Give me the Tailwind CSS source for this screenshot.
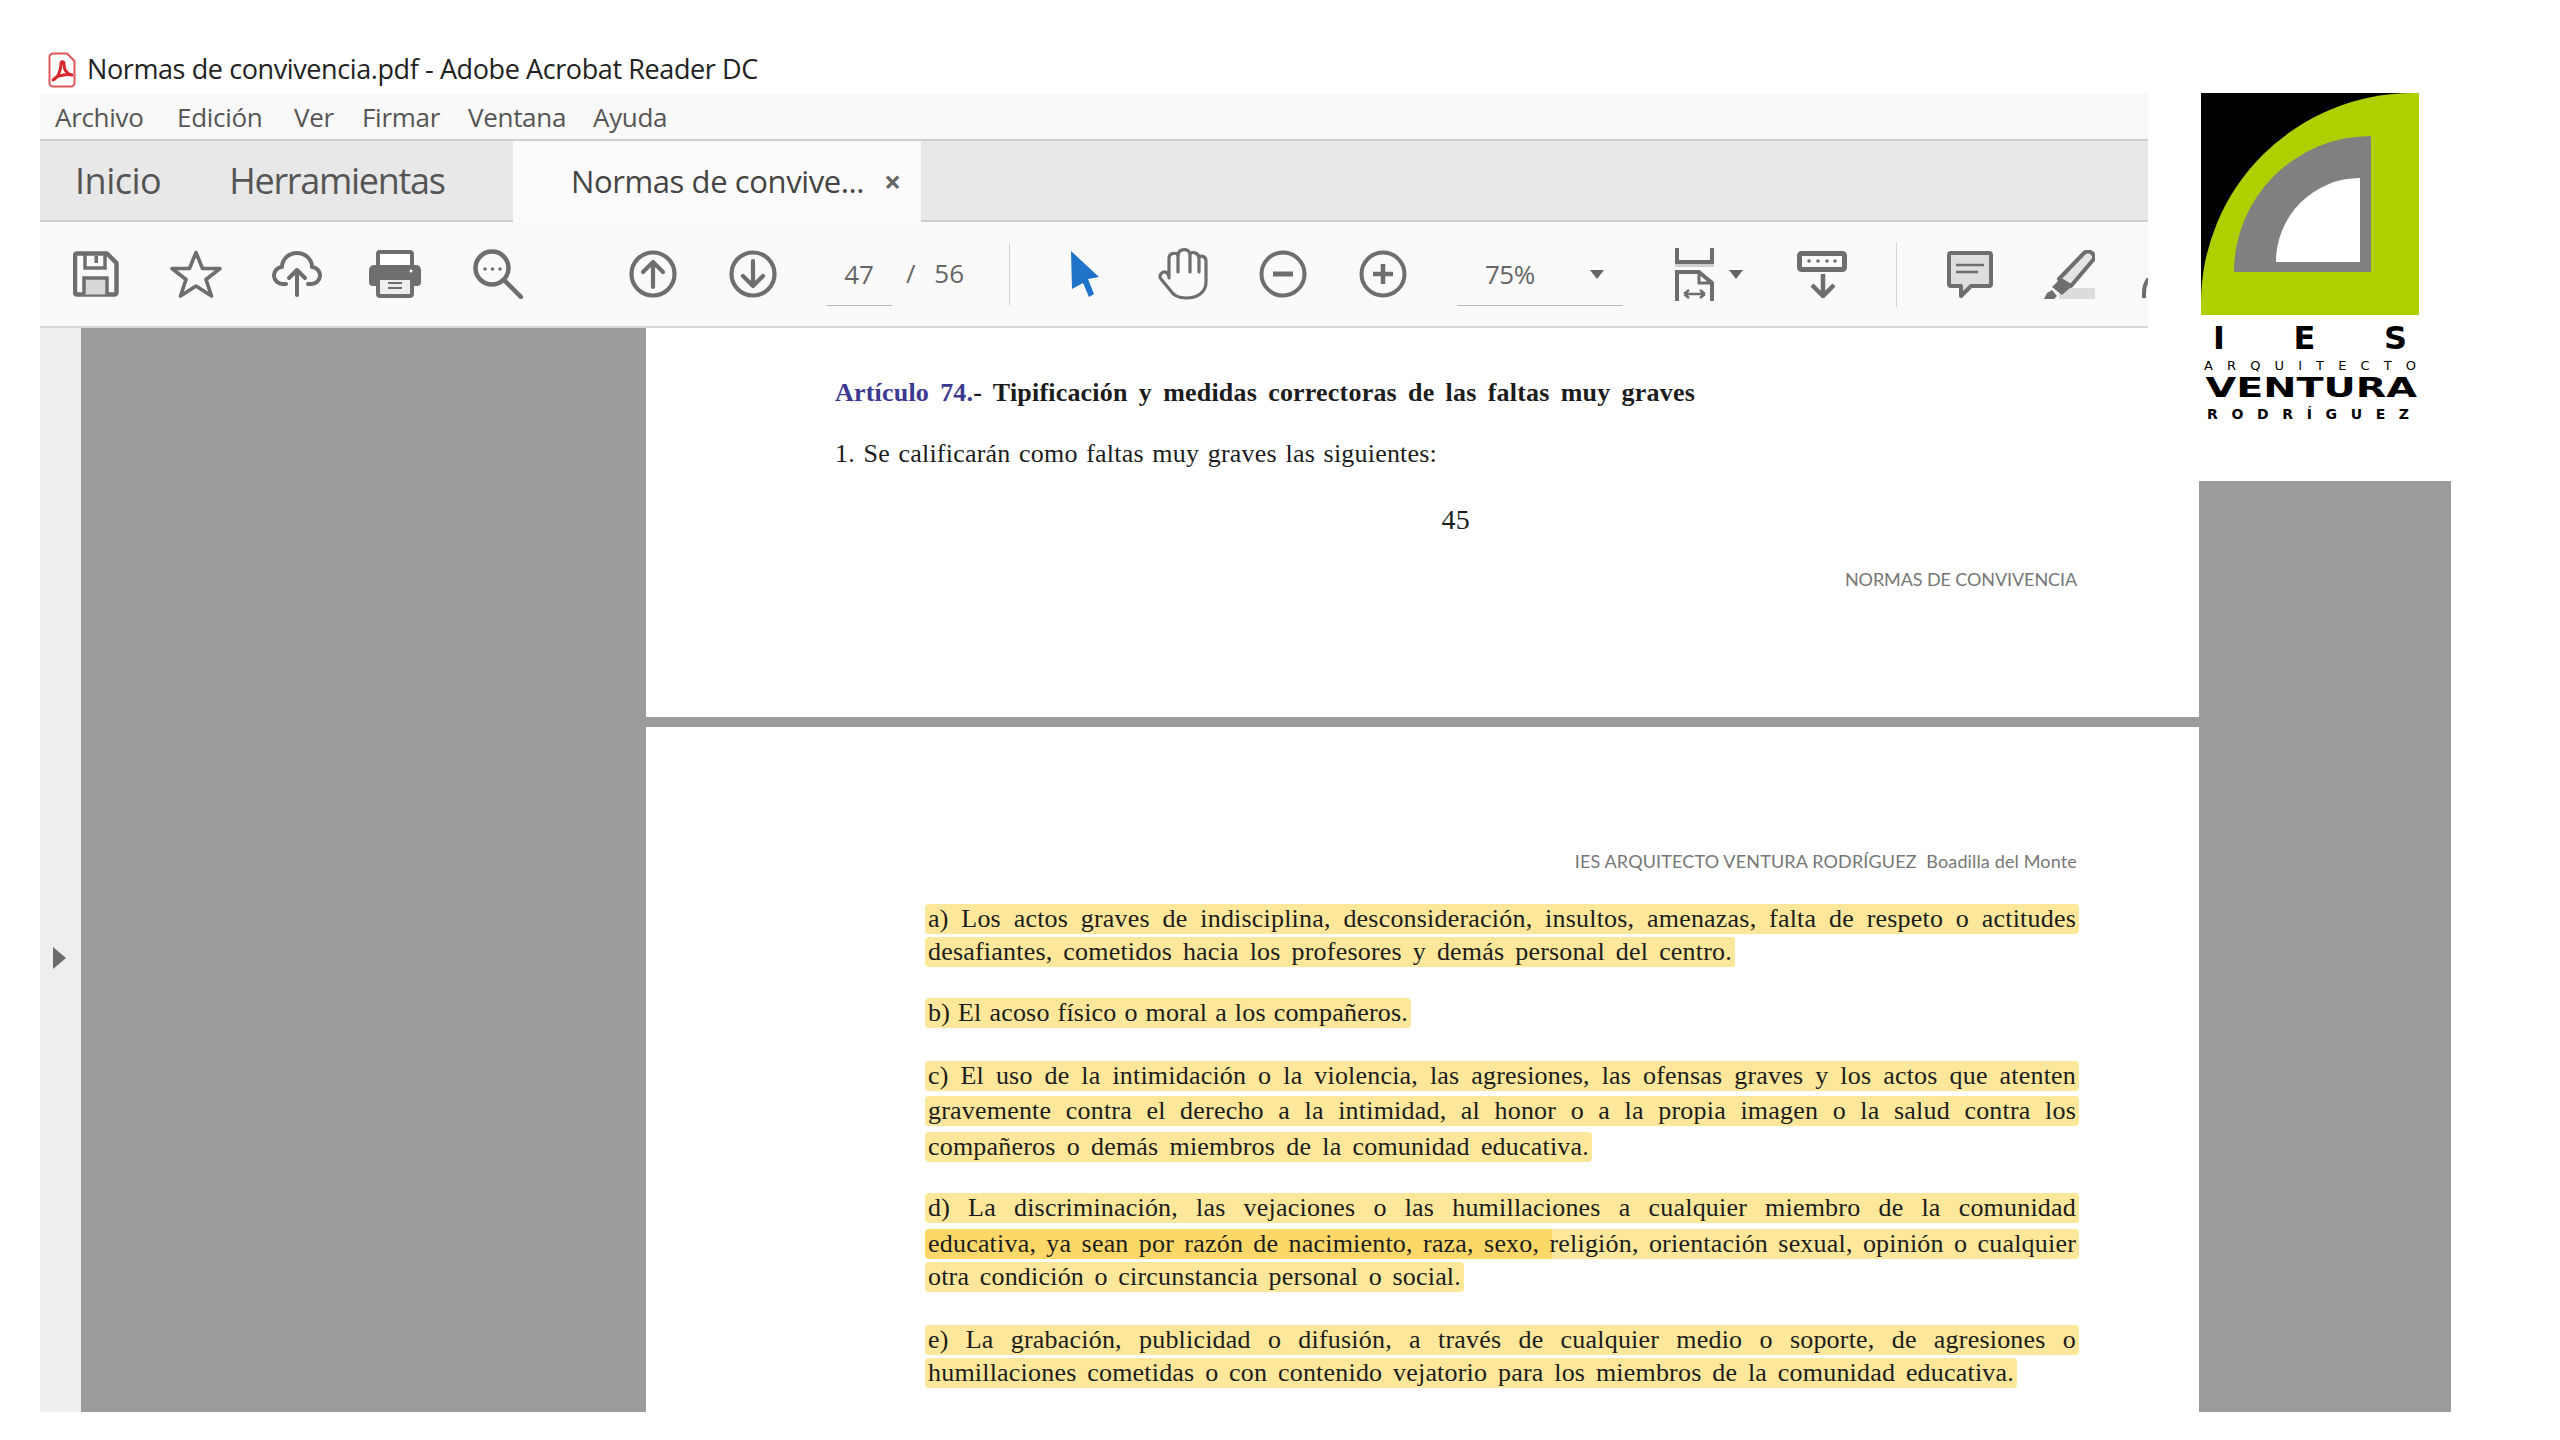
<!DOCTYPE html>
<html lang="es">

<head>
    <meta charset="UTF-8" />
    <title>Normas de convivencia</title>
    <script src="https://cdn.jsdelivr.net/npm/@tailwindcss/browser@4"></script>
</head>

<body class="w-[2560px] h-[1440px] bg-white overflow-hidden font-['Open_Sans',sans-serif]">
    <div class="flex h-[1412px] pl-[40px]">
        <!-- left: reader window -->
        <div class="w-[2159px] flex flex-col">
            <div class="w-[2108px] flex flex-col">
                <!-- title bar -->
                <div class="h-[93px] pt-[46px] pl-[8px] flex items-center bg-white">
                    <svg class="w-[28px] h-[36px]" viewBox="0 0 28 36">
                        <path d="M5 1.500H19L26.500 9V31a3.500 3.500 0 0 1-3.500 3.500H5A3.500 3.500 0 0 1 1.500 31V5A3.500 3.500 0 0 1 5 1.500Z" fill="#fff" stroke="#e0575b" stroke-width="2" />
                        <path d="M5 28C10 26 13 18 13 12C13 9 16 9 16 12C16 18 19 22 24 23C20 22 11 23 7 26Z" fill="none" stroke="#d9262c" stroke-width="3" stroke-linejoin="round" />
                    </svg>
                    <span class="ml-[11px] text-[27px] tracking-[-0.4px] text-[#222] whitespace-nowrap">Normas de convivencia.pdf - Adobe Acrobat Reader DC</span>
                </div>
                <!-- menu -->
                <div class="h-[48px] pt-[2px] bg-[#f9f9f9] border-b-2 border-[#cfcfcf] flex items-center text-[26px] tracking-[-0.3px] text-[#555]">
                    <span class="ml-[15px] w-[122px]">Archivo</span>
                    <span class="w-[117px]">Edición</span>
                    <span class="w-[68px]">Ver</span>
                    <span class="w-[106px]">Firmar</span>
                    <span class="w-[125px]">Ventana</span>
                    <span>Ayuda</span>
                </div>
                <!-- tabs -->
                <div class="h-[81px] bg-[#e8e8e8] flex border-b-2 border-[#cfcfcf]">
                    <div class="w-[473px] flex items-center text-[36px] text-[#555]">
                        <span class="ml-[35px] tracking-[-0.5px]">Inicio</span>
                        <span class="ml-[68px] tracking-[-1.3px]">Herramientas</span>
                    </div>
                    <div class="w-[408px] h-[81px] bg-[#fbfbfb] flex items-center text-[31px] tracking-[-0.4px] text-[#444]">
                        <span class="ml-[58px] whitespace-nowrap">Normas de convive...</span>
                        <span class="ml-[20px] text-[30px] font-bold text-[#666] leading-none">×</span>
                    </div>
                </div>
                <!-- toolbar -->
                <div class="h-[106px] bg-[#fafafa] border-b-2 border-[#d6d6d6] flex items-center overflow-hidden text-[#666]">
                    <svg class="ml-[33px] w-[46px] h-[46px] shrink-0" viewBox="0 0 46 46" fill="none" stroke="#6e6e6e" stroke-width="4.500">
                        <path d="M4 2.500H34L43.500 12V41.500a2 2 0 0 1-2 2H4a2 2 0 0 1-2-2V4.500a2 2 0 0 1 2-2Z" stroke-linejoin="round" />
                        <path d="M12 2.500V17H32V2.500" stroke-width="3.500" />
                        <rect x="21.500" y="5" width="3.500" height="7" fill="#6e6e6e" stroke="none" />
                        <path d="M11 43.500V27H34V43.500" fill="#d8d8d8" stroke-width="3.500" />
                    </svg>
                    <svg class="ml-[50px] w-[54px] h-[50px] shrink-0" viewBox="0 0 54 50" fill="none" stroke="#6e6e6e" stroke-width="3.600" stroke-linejoin="round">
                        <path d="M27 3.500L33.500 19.500H51L37 30.500L42.500 47L27 37L11.500 47L17 30.500L3 19.500H20.500Z" />
                    </svg>
                    <svg class="ml-[49px] w-[50px] h-[46px] shrink-0" viewBox="0 0 50 46" fill="none" stroke="#6e6e6e" stroke-width="4" stroke-linecap="round" stroke-linejoin="round">
                        <path d="M14 33H11A8.500 8.500 0 0 1 10 16A15 14 0 0 1 40 16A8.500 8.500 0 0 1 39 33H36" />
                        <path d="M25 44V19M17 27L25 19L33 27" />
                    </svg>
                    <svg class="ml-[47px] w-[52px] h-[48px] shrink-0" viewBox="0 0 52 48">
                        <rect x="9" y="2" width="34" height="18" rx="2" fill="#fff" stroke="#6e6e6e" stroke-width="4" />
                        <path d="M5 15H47a5 5 0 0 1 5 5V32a4 4 0 0 1-4 4H4a4 4 0 0 1-4-4V20a5 5 0 0 1 5-5Z" fill="#6e6e6e" />
                        <circle cx="42" cy="21" r="1.500" fill="#fff" />
                        <rect x="9" y="28" width="34" height="18" rx="2" fill="#eeeeee" stroke="#6e6e6e" stroke-width="4" />
                        <path d="M19 33H33M19 38H33" stroke="#6e6e6e" stroke-width="2" />
                    </svg>
                    <svg class="ml-[52px] w-[50px] h-[50px] shrink-0" viewBox="0 0 50 50" fill="none" stroke="#6e6e6e">
                        <circle cx="19" cy="19" r="16.500" stroke-width="4.500" />
                        <path d="M32 32L48 48" stroke-width="4.500" stroke-linecap="round" />
                        <circle cx="12" cy="20" r="1.800" fill="#6e6e6e" stroke="none" />
                        <circle cx="19.500" cy="20" r="1.800" fill="#6e6e6e" stroke="none" />
                        <circle cx="27" cy="20" r="1.800" fill="#6e6e6e" stroke="none" />
                    </svg>
                    <svg class="ml-[106px] w-[48px] h-[48px] shrink-0" viewBox="0 0 48 48" fill="none" stroke="#6e6e6e" stroke-width="4.200" stroke-linecap="round" stroke-linejoin="round">
                        <circle cx="24" cy="24" r="21.500" />
                        <path d="M24 37V12M14 22L24 12L34 22" />
                    </svg>
                    <svg class="ml-[52px] w-[48px] h-[48px] shrink-0" viewBox="0 0 48 48" fill="none" stroke="#6e6e6e" stroke-width="4.200" stroke-linecap="round" stroke-linejoin="round">
                        <circle cx="24" cy="24" r="21.500" />
                        <path d="M24 11V36M14 26L24 36L34 26" />
                    </svg>
                    <div class="ml-[49px] w-[66px] h-[49px] mt-[14px] border-b border-[#bbb] text-center text-[26px] leading-[34px] text-[#666] shrink-0">47</div>
                    <div class="ml-[14px] w-[58px] mb-[1px] flex justify-between text-[26px] text-[#666] shrink-0"><span>/</span><span>56</span></div>
                    <div class="ml-[45px] w-px h-[63px] bg-[#d4d4d4] shrink-0"></div>
                    <svg class="ml-[61px] w-[28px] h-[46px] shrink-0" viewBox="0 0 28 46">
                        <path d="M0 0L28 26L17 28L23 43L18 46L12 32L1 38Z" fill="#1f73c9" />
                    </svg>
                    <svg class="ml-[59px] w-[50px] h-[52px] shrink-0" viewBox="0 0 50 52" fill="none" stroke="#6e6e6e" stroke-width="3.200" stroke-linecap="round" stroke-linejoin="round">
                        <path d="M11 30V10C11 5 18 4 20 7C21 0 31 0 32 6C34 3 40 5 41 9C44 7 48 9 48 13V34C48 44 40 50 28 50C20 50 15 47 12 42L3 31C0 27 5 22 9 25L11 28" />
                        <path d="M20 7V24M32 6V24M41 9V24" />
                    </svg>
                    <svg class="ml-[51px] w-[48px] h-[48px] shrink-0" viewBox="0 0 48 48" fill="none" stroke="#6e6e6e" stroke-width="4">
                        <circle cx="24" cy="24" r="21.500" />
                        <path d="M14 24H34" stroke-width="5" />
                    </svg>
                    <svg class="ml-[52px] w-[48px] h-[48px] shrink-0" viewBox="0 0 48 48" fill="none" stroke="#6e6e6e" stroke-width="4">
                        <circle cx="24" cy="24" r="21.500" />
                        <path d="M14 24H34M24 14V34" stroke-width="4.500" />
                    </svg>
                    <div class="ml-[50px] w-[166px] h-[49px] mt-[14px] pb-[13px] border-b border-[#bbb] flex items-center text-[26px] text-[#666] shrink-0">
                        <span class="ml-[28px] tracking-[-0.5px]">75%</span>
                        <span class="ml-[55px] w-0 h-0 border-x-[7px] border-x-transparent border-t-[9px] border-t-[#666]"></span>
                    </div>
                    <svg class="ml-[52px] w-[39px] h-[53px] shrink-0" viewBox="0 0 39 53" fill="none" stroke="#6e6e6e" stroke-width="4">
                        <path d="M2 0V14H37V0" />
                        <rect x="0" y="16" width="39" height="3" fill="#d0d0d0" stroke="none" />
                        <path d="M2 53V24H24L37 35V53" />
                        <path d="M24 24V35H37" stroke-width="3" />
                        <path d="M9 46H30M9 46L14 42M9 46L14 50M30 46L25 42M30 46L25 50" stroke-width="2.500" />
                    </svg>
                    <span class="ml-[15px] w-0 h-0 border-x-[7px] border-x-transparent border-t-[9px] border-t-[#666] shrink-0"></span>
                    <svg class="ml-[54px] w-[50px] h-[47px] shrink-0" viewBox="0 0 50 47" fill="none" stroke="#6e6e6e">
                        <rect x="2.500" y="2.500" width="45" height="16" rx="2" stroke-width="5" fill="#fafafa" />
                        <circle cx="12" cy="10" r="1.800" fill="#6e6e6e" stroke="none" />
                        <circle cx="21" cy="10" r="1.800" fill="#6e6e6e" stroke="none" />
                        <circle cx="30" cy="10" r="1.800" fill="#6e6e6e" stroke="none" />
                        <circle cx="38" cy="10" r="1.800" fill="#6e6e6e" stroke="none" />
                        <path d="M26 23V45M15 34L26 45L37 34" stroke-width="4.500" />
                    </svg>
                    <div class="ml-[49px] w-px h-[65px] bg-[#d4d4d4] shrink-0"></div>
                    <svg class="ml-[50px] w-[46px] h-[47px] shrink-0" viewBox="0 0 46 47">
                        <path d="M4 2H42a2 2 0 0 1 2 2V33a2 2 0 0 1-2 2H24L14 45V35H4a2 2 0 0 1-2-2V4a2 2 0 0 1 2-2Z" fill="#dedede" stroke="#6e6e6e" stroke-width="4" stroke-linejoin="round" />
                        <path d="M9 14H37M9 21H31" stroke="#6e6e6e" stroke-width="2.500" />
                    </svg>
                    <svg class="ml-[51px] w-[51px] h-[49px] shrink-0" viewBox="0 0 51 49">
                        <rect x="15" y="38" width="36" height="11" fill="#dcdcdc" />
                        <path d="M40 3C42 1 46 1 48 3C50 5 51 8 49 10L27 36L15 29Z" fill="#e4e4e4" stroke="#6e6e6e" stroke-width="4" stroke-linejoin="round" />
                        <path d="M15 30L27 37L18 45L8 37Z" fill="#6e6e6e" />
                        <path d="M0 49L3 43L8 40L13 46L10 49Z" fill="#6e6e6e" />
                    </svg>
                    <svg class="ml-[47px] w-[10px] h-[20px] mt-[27px] shrink-0" viewBox="0 0 10 20" fill="none" stroke="#6e6e6e" stroke-width="4">
                        <path d="M7 0C3 5 2 10 2 15V20" />
                    </svg>
                </div>
            </div>
            <!-- document area -->
            <div class="flex-1 flex min-h-0">
                <div class="w-[41px] bg-[#eeeeee] flex items-center pt-[176px]">
                    <span class="ml-[13px] w-0 h-0 border-y-[11px] border-y-transparent border-l-[13px] border-l-[#6b6b6b]"></span>
                </div>
                <div class="w-[565px] bg-[#9c9c9c]"></div>
                <div class="flex-1 flex flex-col bg-[#9c9c9c] font-['Liberation_Serif',serif] text-[26px] tracking-[0.2px] text-[#1c1c1c]">
                    <!-- page 45 -->
                    <div class="h-[389px] bg-white pt-[50px] pl-[189px]">
                        <div class="h-[30px] w-[860px] leading-[30px] font-bold [text-align-last:justify]"><span class="text-[#3b3a8f]">Artículo 74.</span>- Tipificación y medidas correctoras de las faltas muy graves</div>
                        <div class="h-[30px] w-[602px] mt-[31px] leading-[30px] [text-align-last:justify]">1. Se calificarán como faltas muy graves las siguientes:</div>
                        <div class="h-[30px] w-[635px] mt-[36px] leading-[30px] text-[28px] text-right">45</div>
                        <div class="h-[30px] w-[1242px] mt-[29px] leading-[30px] text-right font-['Lato',sans-serif] text-[18px] tracking-[-0.1px] text-[#777]">NORMAS DE CONVIVENCIA</div>
                    </div>
                    <div class="h-[10px] shrink-0"></div>
                    <!-- page 46 -->
                    <div class="flex-1 bg-white pt-[119px] pl-[279px] overflow-hidden">
                        <div class="h-[30px] w-[1152px] leading-[30px] text-right font-['Lato',sans-serif] text-[18px] tracking-[0.15px] text-[#777] whitespace-pre">IES ARQUITECTO VENTURA RODRÍGUEZ  Boadilla del Monte</div>
                        <div class="h-[30px] w-[1154px] mt-[28px] px-[3px] rounded bg-[#fde79a] leading-[30px] [text-align-last:justify]">a) Los actos graves de indisciplina, desconsideración, insultos, amenazas, falta de respeto o actitudes</div>
                        <div class="h-[30px] w-[810px] mt-[3px] px-[3px] rounded bg-[#fde79a] leading-[30px] [text-align-last:justify]">desafiantes, cometidos hacia los profesores y demás personal del centro.</div>
                        <div class="h-[30px] w-[486px] mt-[31px] px-[3px] rounded bg-[#fde79a] leading-[30px] [text-align-last:justify]">b) El acoso físico o moral a los compañeros.</div>
                        <div class="h-[30px] w-[1154px] mt-[33px] px-[3px] rounded bg-[#fde79a] leading-[30px] [text-align-last:justify]">c) El uso de la intimidación o la violencia, las agresiones, las ofensas graves y los actos que atenten</div>
                        <div class="h-[30px] w-[1154px] mt-[5px] px-[3px] rounded bg-[#fde79a] leading-[30px] [text-align-last:justify]">gravemente contra el derecho a la intimidad, al honor o a la propia imagen o la salud contra los</div>
                        <div class="h-[30px] w-[667px] mt-[6px] px-[3px] rounded bg-[#fde79a] leading-[30px] [text-align-last:justify]">compañeros o demás miembros de la comunidad educativa.</div>
                        <div class="h-[30px] w-[1154px] mt-[31px] px-[3px] rounded bg-[#fde79a] leading-[30px] [text-align-last:justify]">d) La discriminación, las vejaciones o las humillaciones a cualquier miembro de la comunidad</div>
                        <div class="h-[30px] w-[1154px] mt-[6px] px-[3px] rounded bg-[linear-gradient(90deg,#fcd868_627px,#fde79a_627px)] leading-[30px] [text-align-last:justify]">educativa, ya sean por razón de nacimiento, raza, sexo, religión, orientación sexual, opinión o cualquier</div>
                        <div class="h-[30px] w-[539px] mt-[3px] px-[3px] rounded bg-[#fde79a] leading-[30px] [text-align-last:justify]">otra condición o circunstancia personal o social.</div>
                        <div class="h-[30px] w-[1154px] mt-[33px] px-[3px] rounded bg-[#fde79a] leading-[30px] [text-align-last:justify]">e) La grabación, publicidad o difusión, a través de cualquier medio o soporte, de agresiones o</div>
                        <div class="h-[30px] w-[1092px] mt-[3px] px-[3px] rounded bg-[#fde79a] leading-[30px] [text-align-last:justify]">humillaciones cometidas o con contenido vejatorio para los miembros de la comunidad educativa.</div>
                    </div>
                </div>
            </div>
        </div>
        <!-- right: school logo over grey margin -->
        <div class="w-[252px] flex flex-col">
            <div class="h-[481px] pt-[93px] pl-[2px] bg-white">
                <svg class="block w-[218px] h-[222px]" viewBox="0 0 218 222">
                    <rect width="218" height="222" fill="#000" />
                    <path d="M0 222V210A212 210 0 0 1 212 0H218V222Z" fill="#afd000" />
                    <path d="M33 179A137 136 0 0 1 170 43V179Z" fill="#808080" />
                    <path d="M75 169A84 84 0 0 1 159 85V169Z" fill="#fff" />
                </svg>
                <div class="w-[218px] font-['DejaVu_Sans',sans-serif] font-bold text-black">
                    <div class="mt-[8px] px-[12px] h-[30px] leading-[30px] text-[32px] [text-align-last:justify]">I E S</div>
                    <div class="h-[15px] mt-[5px] px-[3px] leading-[15px] text-[13px] font-normal [text-align-last:justify]">A R Q U I T E C T O</div>
                    <div class="h-[24px] mt-[3px] px-[3px] leading-[24px] text-[27px] whitespace-nowrap origin-left scale-x-[1.47]">VENTURA</div>
                    <div class="h-[16px] mt-[6px] px-[6px] w-[214px] leading-[16px] text-[14px] [text-align-last:justify]">R O D R Í G U E Z</div>
                </div>
            </div>
            <div class="flex-1 bg-[#9c9c9c]"></div>
        </div>
    </div>
</body>

</html>
